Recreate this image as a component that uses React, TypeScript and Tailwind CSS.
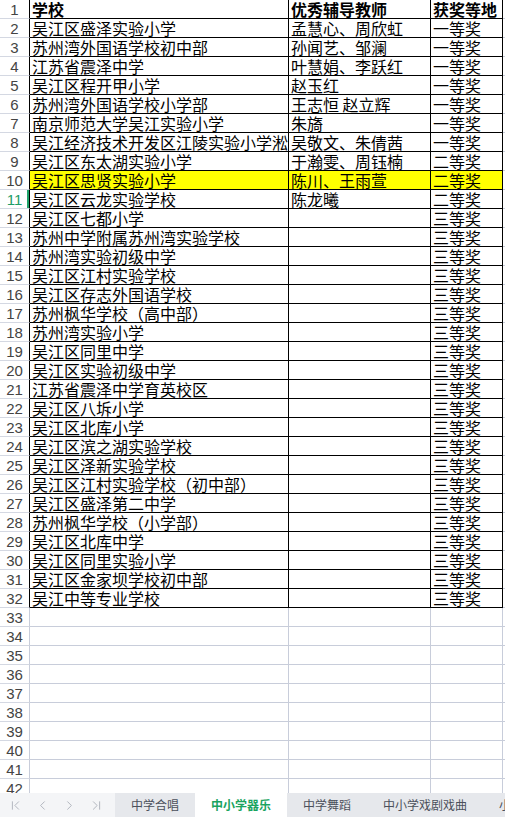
import { ChevronFirst, ChevronLast, ChevronLeft, ChevronRight } from 'lucide-react'

type Row = [string, string, string]

const ROWS: Row[] = [
  ['学校', '优秀辅导教师', '获奖等地'],
  ['吴江区盛泽实验小学', '孟慧心、周欣虹', '一等奖'],
  ['苏州湾外国语学校初中部', '孙闻艺、邹澜', '一等奖'],
  ['江苏省震泽中学', '叶慧娟、李跃红', '一等奖'],
  ['吴江区程开甲小学', '赵玉红', '一等奖'],
  ['苏州湾外国语学校小学部', '王志恒 赵立辉', '一等奖'],
  ['南京师范大学吴江实验小学', '朱旖', '一等奖'],
  ['吴江经济技术开发区江陵实验小学淞南校区', '吴敬文、朱倩茜', '一等奖'],
  ['吴江区东太湖实验小学', '于瀚雯、周钰楠', '二等奖'],
  ['吴江区思贤实验小学', '陈川、王雨萱', '二等奖'],
  ['吴江区云龙实验学校', '陈龙曦', '二等奖'],
  ['吴江区七都小学', '', '三等奖'],
  ['苏州中学附属苏州湾实验学校', '', '三等奖'],
  ['苏州湾实验初级中学', '', '三等奖'],
  ['吴江区江村实验学校', '', '三等奖'],
  ['吴江区存志外国语学校', '', '三等奖'],
  ['苏州枫华学校（高中部）', '', '三等奖'],
  ['苏州湾实验小学', '', '三等奖'],
  ['吴江区同里中学', '', '三等奖'],
  ['吴江区实验初级中学', '', '三等奖'],
  ['江苏省震泽中学育英校区', '', '三等奖'],
  ['吴江区八坼小学', '', '三等奖'],
  ['吴江区北库小学', '', '三等奖'],
  ['吴江区滨之湖实验学校', '', '三等奖'],
  ['吴江区泽新实验学校', '', '三等奖'],
  ['吴江区江村实验学校（初中部）', '', '三等奖'],
  ['吴江区盛泽第二中学', '', '三等奖'],
  ['苏州枫华学校（小学部）', '', '三等奖'],
  ['吴江区北库中学', '', '三等奖'],
  ['吴江区同里实验小学', '', '三等奖'],
  ['吴江区金家坝学校初中部', '', '三等奖'],
  ['吴江中等专业学校', '', '三等奖'],
]

const TOTAL = 42
const TABS = ['中学合唱', '中小学器乐', '中学舞蹈', '中小学戏剧戏曲', '小学合唱']
const ACTIVE_TAB = 1

function SheetRow({ n }: { n: number }) {
  const data = ROWS[n - 1]
  const inData = !!data
  const header = n === 1
  const hl = n === 10
  const sel = n === 11
  const cellLine = inData ? 'border-black' : 'border-[#c8cdda]'
  const cell = `h-full shrink-0 overflow-hidden whitespace-nowrap border-r border-b pl-[2px] ${cellLine} ${hl ? 'bg-[#ffff00]' : ''} ${header ? 'font-bold' : ''}`

  return (
    <div className="flex h-[19px] shrink-0 text-[16px] leading-[19px] text-black">
      <div
        className={`flex h-full w-[30px] shrink-0 items-center justify-center border-b border-r border-b-[#d4d8e2] font-['Liberation_Sans',sans-serif] text-[15px] ${
          inData ? 'border-r-black' : 'border-r-[#c8cdda]'
        } ${sel ? 'text-[#1f9d67] shadow-[inset_-2px_0_0_#1fa36a]' : 'text-[#444]'}`}
      >
        {n}
      </div>
      <div className={`${cell} w-[259px]`}>{data?.[0]}</div>
      <div className={`${cell} w-[142px]`}>{data?.[1]}</div>
      <div className={`${cell} w-[72px]`}>{data?.[2]}</div>
      <div className="h-full flex-1 border-b border-[#c8cdda]" />
    </div>
  )
}

export default function App() {
  return (
    <div className="flex h-[817px] w-[505px] flex-col overflow-hidden bg-white font-['Noto_Sans_CJK_SC','Noto_Sans',sans-serif]">
      <div className="flex h-[793px] shrink-0 flex-col overflow-hidden">
        {Array.from({ length: TOTAL }, (_, i) => (
          <SheetRow key={i} n={i + 1} />
        ))}
      </div>

      {/* sheet tabs */}
      <div className="flex h-[24px] shrink-0 items-stretch bg-[#e6e8ec] text-[12px]">
        <div className="flex w-[115px] shrink-0 items-center gap-[12px] bg-[#f4f5f7] pl-[8px] text-[#a3a8b2]">
          <ChevronFirst size={15} strokeWidth={1.3} />
          <ChevronLeft size={15} strokeWidth={1.3} />
          <ChevronRight size={15} strokeWidth={1.3} />
          <ChevronLast size={15} strokeWidth={1.3} />
        </div>
        {TABS.map((t, i) => (
          <div
            key={t}
            className={`flex shrink-0 items-center whitespace-nowrap px-[16px] ${
              i === ACTIVE_TAB ? 'bg-white font-bold text-[#1aa45f]' : 'text-[#4b505b]'
            }`}
          >
            {t}
          </div>
        ))}
      </div>
    </div>
  )
}
